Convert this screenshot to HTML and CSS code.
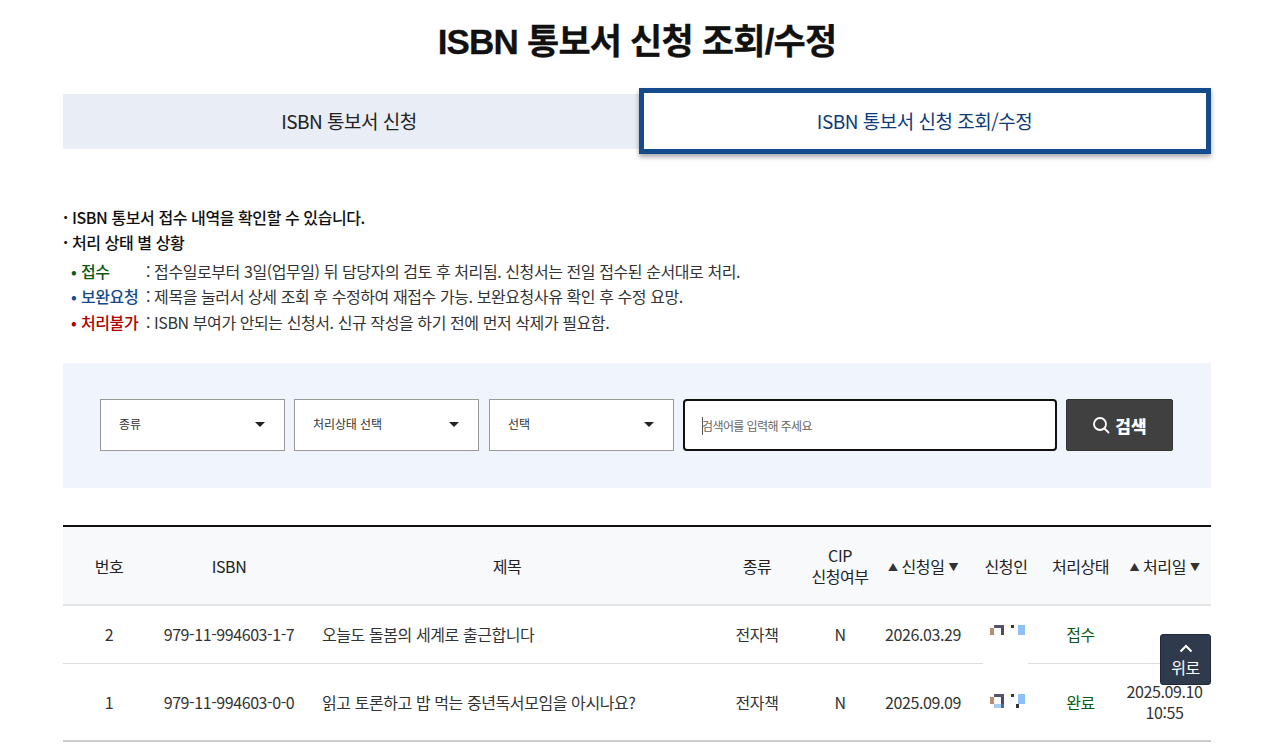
FILE: index.html
```html
<!DOCTYPE html>
<html lang="ko">
<head>
<meta charset="utf-8">
<title>ISBN 통보서 신청 조회/수정</title>
<link rel="stylesheet" href="styles.css">
</head>
<body>
<main class="page">
  <h1 class="title">ISBN 통보서 신청 조회/수정</h1>
  <nav class="tabs">
    <a class="tab">ISBN 통보서 신청</a>
    <a class="tab tab-active">ISBN 통보서 신청 조회/수정</a>
  </nav>
  <section class="guide">
    <p class="lead">ISBN 통보서 접수 내역을 확인할 수 있습니다.</p>
    <p class="lead">처리 상태 별 상황</p>
    <ul class="states">
      <li class="state"><span class="label green">접수</span><span class="desc">: 접수일로부터 3일(업무일) 뒤 담당자의 검토 후 처리됨. 신청서는 전일 접수된 순서대로 처리.</span></li>
      <li class="state"><span class="label blue">보완요청</span><span class="desc">: 제목을 눌러서 상세 조회 후 수정하여 재접수 가능. 보완요청사유 확인 후 수정 요망.</span></li>
      <li class="state"><span class="label red">처리불가</span><span class="desc">: ISBN 부여가 안되는 신청서. 신규 작성을 하기 전에 먼저 삭제가 필요함.</span></li>
    </ul>
  </section>
  <form class="search">
    <div class="select">종류</div>
    <div class="select">처리상태 선택</div>
    <div class="select select-last">선택</div>
    <div class="input"><span class="caret"></span>검색어를 입력해 주세요</div>
    <button class="btn" type="button">
      <svg class="btn-icon" viewBox="0 0 18 18" width="18" height="18"><circle cx="8" cy="8" r="6" fill="none" stroke="#fff" stroke-width="1.8"/><path d="M12.5 12.5L16.5 16.5" stroke="#fff" stroke-width="1.8" stroke-linecap="round"/></svg>
      검색
    </button>
  </form>
  <table class="list">
    <colgroup>
      <col class="c1"><col class="c2"><col class="c3"><col class="c4"><col class="c5"><col class="c6"><col class="c7"><col class="c8"><col class="c9">
    </colgroup>
    <thead>
      <tr>
        <th>번호</th><th>ISBN</th><th>제목</th><th>종류</th><th>CIP<br>신청여부</th>
        <th><span class="tri">▲</span> 신청일 <span class="tri">▼</span></th>
        <th>신청인</th><th>처리상태</th>
        <th><span class="tri">▲</span> 처리일 <span class="tri">▼</span></th>
      </tr>
    </thead>
    <tbody>
      <tr>
        <td>2</td><td>979-11-994603-1-7</td><td class="left">오늘도 돌봄의 세계로 출근합니다</td><td>전자책</td><td>N</td><td>2026.03.29</td>
        <td class="name"><span class="mask"></span><svg class="mosaic" viewBox="0 0 36 14" width="36" height="14" shape-rendering="crispEdges"><rect x="0" y="4" width="4" height="7" fill="#b98d6d"/><rect x="4" y="1" width="10" height="3" fill="#54546a"/><rect x="11" y="4" width="3" height="7" fill="#4a4a60"/><rect x="15" y="1" width="6" height="2" fill="#fdf9e0"/><rect x="21" y="1" width="3" height="3" fill="#333"/><rect x="28" y="1" width="7" height="10" fill="#8dc0f5"/></svg></td>
        <td class="green">접수</td><td></td>
      </tr>
      <tr>
        <td>1</td><td>979-11-994603-0-0</td><td class="left">읽고 토론하고 밥 먹는 중년독서모임을 아시나요?</td><td>전자책</td><td>N</td><td>2025.09.09</td>
        <td class="name"><svg class="mosaic" viewBox="0 0 36 22" width="36" height="22" shape-rendering="crispEdges"><rect x="0" y="4" width="4" height="7" fill="#b98d6d"/><rect x="4" y="1" width="10" height="3" fill="#54546a"/><rect x="11" y="4" width="3" height="7" fill="#4a4a60"/><rect x="4" y="11" width="7" height="4" fill="#a8cdee"/><rect x="11" y="11" width="3" height="4" fill="#3f6ca8"/><rect x="15" y="1" width="6" height="2" fill="#fdf9e0"/><rect x="21" y="1" width="3" height="3" fill="#333"/><rect x="26" y="11" width="3" height="4" fill="#333"/><rect x="28" y="1" width="7" height="10" fill="#8dc0f5"/></svg></td>
        <td class="green">완료</td><td class="stack">2025.09.10<br>10:55</td>
      </tr>
    </tbody>
  </table>
</main>
<a class="top">
  <svg viewBox="0 0 14 9" width="14" height="9"><path d="M1.5 7.5L7 2l5.5 5.5" fill="none" stroke="#fff" stroke-width="2"/></svg>
  <span>위로</span>
</a>
</body>
</html>
```

FILE: styles.css
```css
* { box-sizing: border-box; }
html, body { margin: 0; height: 748px; overflow: hidden; background: #fff; }
body {
  font-family: "Noto Sans CJK KR", sans-serif;
  color: #333;
  letter-spacing: -0.42px;
}
.page { width: 1148px; margin: 0 0 0 63px; }
.title {
  margin: 0;
  padding-top: 17px;
  height: 88px;
  font-family: "Liberation Sans", "Noto Sans CJK KR", sans-serif;
  font-size: 35px;
  line-height: 50px;
  font-weight: 700;
  color: #111;
  text-align: center;
  letter-spacing: -0.8px;
  -webkit-text-stroke: 0.3px #111;
}
.tabs { display: flex; height: 66px; align-items: center; }
.tab {
  flex: 0 0 576px;
  height: 55px;
  padding: 0 4px 2px 0;
  display: flex;
  align-items: center;
  justify-content: center;
  background: #e9edf5;
  font-size: 19px;
  letter-spacing: -0.5px;
  color: #222;
}
.tab-active {
  flex: 0 0 572px;
  height: 66px;
  padding: 0 1px 2px 0;
  background: #fff;
  border: 5px solid #134b8c;
  box-shadow: 0 3px 5px rgba(0, 0, 0, 0.35);
  color: #0f3c78;
}
.guide { padding-top: 51px; font-size: 16px; line-height: 25px; }
.guide p { margin: 0; }
.lead { font-weight: 500; color: #111; padding-left: 9px; position: relative; height: 24.5px; line-height: 24.5px; }
.lead::before { content: "·"; position: absolute; left: 0; font-weight: 700; }
.states { list-style: none; margin: 5px 0 0; padding: 0 0 0 8px; color: #333; }
.state { display: flex; height: 25px; line-height: 25px; }
.state:nth-child(2) { height: 26px; }
.label { flex: 0 0 74px; padding-left: 10px; position: relative; font-weight: 500; }
.label::before { content: "•"; position: absolute; left: 0; }
.desc { padding-left: 1px; }
.green { color: #0a5a14; }
.blue { color: #134b8c; }
.red { color: #b00000; }
.search {
  margin-top: 28px;
  height: 125px;
  background: #f0f4fc;
  padding: 36px 37px 37px;
  display: flex;
  gap: 9px;
}
.select {
  flex: 0 0 185px;
  height: 52px;
  background: #fff;
  border: 1px solid #999;
  font-size: 12px;
  letter-spacing: -0.1px;
  padding-left: 18px;
  line-height: 48px;
  position: relative;
}
.select-last { margin-left: 1px; }
.select::after {
  content: "";
  position: absolute;
  right: 19px;
  top: 22px;
  border: 5px solid transparent;
  border-top: 5px solid #222;
  border-bottom: 0;
}
.input {
  flex: 0 0 374px;
  height: 52px;
  background: #fff;
  border: 2px solid #111;
  border-radius: 4px;
  font-size: 12px;
  letter-spacing: -0.6px;
  line-height: 49px;
  padding-left: 17px;
  color: #666;
  position: relative;
}
.caret { position: absolute; left: 17px; top: 16px; width: 1px; height: 18px; background: #555; }
.btn {
  flex: 0 0 107px;
  height: 52px;
  background: #404040;
  border: 1px solid #333;
  border-radius: 2px;
  color: #fff;
  font: 900 17px "Noto Sans CJK KR", sans-serif;
  display: flex;
  align-items: center;
  justify-content: center;
  gap: 5px;
  padding: 0;
}
.list {
  margin-top: 37px;
  width: 1148px;
  table-layout: fixed;
  border-collapse: collapse;
  border-top: 2px solid #111;
  border-bottom: 2px solid #ccc;
  font-size: 16px;
}
.c1 { width: 92px; } .c2 { width: 148px; } .c3 { width: 408px; } .c4 { width: 92px; }
.c5 { width: 74px; } .c6 { width: 92px; } .c7 { width: 74px; } .c8 { width: 75px; } .c9 { width: 93px; }
.list th {
  height: 79px;
  padding: 1px 0 0;
  background: #f8f9fb;
  border-bottom: 2px solid #e4e4e4;
  font-weight: 400;
  color: #222;
  line-height: 21px;
}
.list td {
  padding: 1px 0 0;
  text-align: center;
  line-height: 23px;
  border-bottom: 1px solid #ddd;
}
.list tbody tr:first-child td { height: 58px; }
.list tbody tr:last-child td { height: 78px; padding-top: 2px; border-bottom: 0; }
.list td.left { text-align: left; padding-left: 19px; }
.list td.green { color: #0a5a14; }
.list tbody tr:last-child td.stack { padding-top: 0; line-height: 21px; }
.tri { font-size: 10px; vertical-align: 2px; color: #333; }
.name { position: relative; }
.mosaic { position: absolute; left: 21px; top: 18px; }
.list tbody tr:last-child .mosaic { top: 29px; }
.mask { position: absolute; left: 14px; bottom: -2px; width: 45px; height: 4px; background: #fff; }
.top {
  position: fixed;
  left: 1160px;
  top: 634px;
  width: 51px;
  height: 51px;
  background: #2f3b4c;
  border: 1px solid #1f2937;
  border-radius: 3px;
  color: #fff;
  font-size: 16px;
  line-height: 20px;
  display: flex;
  flex-direction: column;
  align-items: center;
  padding-top: 9px;
  gap: 4px;
}
```
